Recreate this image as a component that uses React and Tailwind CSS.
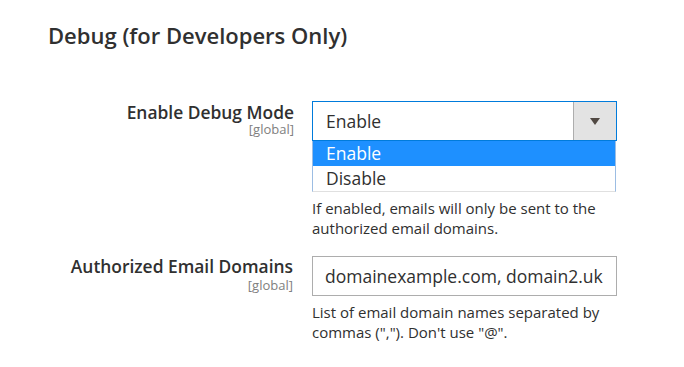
export default function App() {
  return (
    <div className="min-h-screen bg-white font-['Open_Sans',sans-serif] text-[#303030]">
      <h2 className="pl-[48px] pt-[20px] text-[22px] font-semibold leading-[30px]">
        Debug (for Developers Only)
      </h2>

      <div className="mt-[51px] flex items-start">
        <div className="w-[294px] shrink-0 text-right">
          <div className="text-[17.4px] font-semibold leading-[22px]">Enable Debug Mode</div>
          <div className="-mt-[1px] text-[13px] leading-[14px] text-[#808080]">[global]</div>
        </div>
        <div className="ml-[18px] w-[305px]">
          <div className="flex h-[40px] border border-[#007bdb] bg-white">
            <div className="flex flex-1 items-center pl-[13px] text-[17.5px]">Enable</div>
            <div className="flex w-[43px] items-center justify-center border-l border-[#adadad] bg-[#e3e3e3]">
              <svg width="10" height="7" viewBox="0 0 10 7">
                <path d="M0 0h10L5 7z" fill="#514943" />
              </svg>
            </div>
          </div>
          <div className="mr-[1px] border-x border-b border-[#9cbde3] border-b-[#e0e0e0] bg-white text-[17.5px]">
            <div className="flex h-[25px] items-center bg-[#1e90ff] pl-[13px] text-white">Enable</div>
            <div className="flex h-[25px] items-center pl-[13px]">Disable</div>
          </div>
          <p className="mt-[7px] text-[15px] leading-[19.5px]">
            If enabled, emails will only be sent to the authorized email domains.
          </p>
        </div>
      </div>

      <div className="mt-[18px] flex items-start">
        <div className="-mt-[1px] w-[293px] shrink-0 text-right">
          <div className="text-[17.4px] font-semibold leading-[22px]">Authorized Email Domains</div>
          <div className="mt-[1px] text-[13px] leading-[14px] text-[#808080]">[global]</div>
        </div>
        <div className="ml-[19px] w-[305px]">
          <div className="flex h-[40px] items-center border border-[#adadad] bg-white pl-[12px] text-[17.5px]">
            domainexample.com, domain2.uk
          </div>
          <p className="mt-[7px] text-[15px] leading-[19.5px]">
            List of email domain names separated by commas (","). Don't use "@".
          </p>
        </div>
      </div>
    </div>
  );
}
